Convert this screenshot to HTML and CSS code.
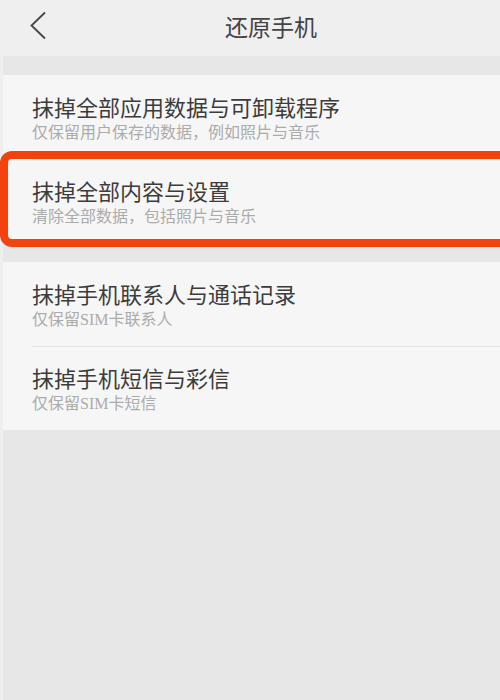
FILE: index.html
```html
<!DOCTYPE html>
<html lang="zh-CN">
<head>
    <meta charset="UTF-8">
    <meta name="viewport" content="width=device-width, initial-scale=1.0">
    <title>还原手机</title>
    <link rel="stylesheet" href="styles.css">
</head>
<body>
    <header class="topbar">
        <svg class="back" width="18" height="30" viewBox="0 0 18 30">
            <path d="M15 1.5 L1.5 14.5 L15 27.5" fill="none" stroke="#454545" stroke-width="1.8"/>
        </svg>
        <h1 class="title">还原手机</h1>
    </header>

    <main class="content">
        <section class="group">
            <div class="item">
                <div class="item-title">抹掉全部应用数据与可卸载程序</div>
                <div class="item-sub">仅保留用户保存的数据，例如照片与音乐</div>
            </div>
            <div class="item">
                <div class="item-title">抹掉全部内容与设置</div>
                <div class="item-sub">清除全部数据，包括照片与音乐</div>
                <div class="highlight"></div>
            </div>
        </section>

        <section class="group">
            <div class="item">
                <div class="item-title">抹掉手机联系人与通话记录</div>
                <div class="item-sub">仅保留SIM卡联系人</div>
            </div>
            <div class="item">
                <div class="item-title">抹掉手机短信与彩信</div>
                <div class="item-sub">仅保留SIM卡短信</div>
            </div>
        </section>
    </main>
</body>
</html>
```

FILE: styles.css
```css
* {
    margin: 0;
    padding: 0;
    box-sizing: border-box;
}
html, body {
    height: 100%;
}
body {
    font-family: "Noto Sans CJK SC", "Noto Sans", sans-serif;
    background-color: #efefef;
    color: #3c3c3c;
    display: flex;
    flex-direction: column;
    overflow: hidden;
}
.topbar {
    height: 56px;
    display: flex;
    align-items: center;
    padding-left: 30px;
    padding-bottom: 4px;
}
.back {
    display: block;
}
.title {
    font-size: 23px;
    font-weight: normal;
    color: #444;
    margin-left: 177px;
    line-height: 30px;
}
.content {
    flex: 1;
    margin-left: 3px;
    background-color: #e7e7e7;
    padding-top: 19px;
    display: flex;
    flex-direction: column;
    gap: 19px;
}
.group {
    background-color: #f6f6f6;
}
.item {
    position: relative;
    height: 84px;
    padding: 17px 0 0 29px;
}
.item + .item::before {
    content: "";
    position: absolute;
    top: 0;
    left: 29px;
    right: 0;
    border-top: 1px solid #e4e4e4;
}
.item-title {
    font-size: 22px;
    line-height: 28px;
    color: #3c3c3c;
}
.item-sub {
    font-family: "Liberation Serif", "Noto Sans CJK SC", serif;
    font-size: 16px;
    line-height: 20px;
    margin-top: 3px;
    color: #ababab;
}
.highlight {
    position: absolute;
    top: -8px;
    left: -3px;
    right: -14px;
    bottom: -4px;
    border: 8px solid #f4420f;
    border-radius: 12px;
}
```
